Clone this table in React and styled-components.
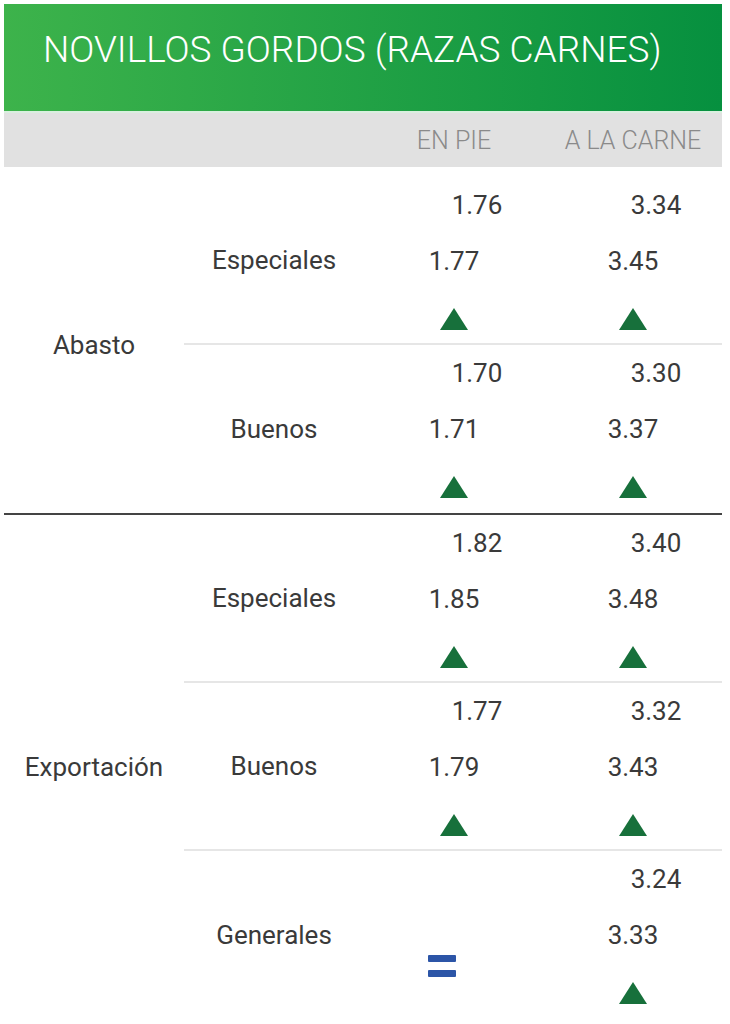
import React from 'react';
import styled, { createGlobalStyle } from 'styled-components';

const GlobalStyle = createGlobalStyle`
	body {
		margin: 0;
		background: #fff;
		font-family: Roboto, "Liberation Sans", sans-serif;
	}
`;

const groups = [
	{
		name: 'Abasto',
		rows: [
			{ name: 'Especiales', pie: { prev: '1.76', curr: '1.77', trend: 'up' }, carne: { prev: '3.34', curr: '3.45', trend: 'up' } },
			{ name: 'Buenos', pie: { prev: '1.70', curr: '1.71', trend: 'up' }, carne: { prev: '3.30', curr: '3.37', trend: 'up' } },
		],
	},
	{
		name: 'Exportación',
		rows: [
			{ name: 'Especiales', pie: { prev: '1.82', curr: '1.85', trend: 'up' }, carne: { prev: '3.40', curr: '3.48', trend: 'up' } },
			{ name: 'Buenos', pie: { prev: '1.77', curr: '1.79', trend: 'up' }, carne: { prev: '3.32', curr: '3.43', trend: 'up' } },
			{ name: 'Generales', pie: { trend: 'eq' }, carne: { prev: '3.24', curr: '3.33', trend: 'up' } },
		],
	},
];

const UpArrow = () => (
	<ArrowBox width="28" height="22" viewBox="0 0 28 22">
		<polygon points="14,0 28,22 0,22" fill="#17703b" />
	</ArrowBox>
);

const Value = ({ data }) => {
	if (data.trend === 'eq') {
		return (
			<Cell>
				<EqualSign><span /><span /></EqualSign>
			</Cell>
		);
	}
	return (
		<Cell>
			<Prev>{data.prev}</Prev>
			<Curr>{data.curr}</Curr>
			<UpArrow />
		</Cell>
	);
};

const App = () => (
	<Page>
		<GlobalStyle />
		<Title>NOVILLOS GORDOS (RAZAS CARNES)</Title>
		<ColHeader>
			<span />
			<span />
			<span>EN PIE</span>
			<span>A LA CARNE</span>
		</ColHeader>
		<Body>
			{groups.map(group => (
				<Group key={group.name}>
					<GroupLabel>{group.name}</GroupLabel>
					<div>
						{group.rows.map(row => (
							<SubRow key={row.name}>
								<SubLabel>{row.name}</SubLabel>
								<Value data={row.pie} />
								<Value data={row.carne} />
							</SubRow>
						))}
					</div>
				</Group>
			))}
		</Body>
	</Page>
);

const Page = styled.div`
	width: 718px;
	padding: 4px 8px 0 4px;
	color: #3a3a3a;
`;

const Title = styled.h1`
	margin: 0;
	height: 109px;
	box-sizing: border-box;
	padding: 27px 0 0 39px;
	background: linear-gradient(to right, #3db34b, #06903f);
	border-bottom: 2px solid #d9efdf;
	color: #fff;
	font-size: 37px;
	font-weight: 300;
	line-height: 1;
	white-space: nowrap;
`;

const ColHeader = styled.div`
	display: grid;
	grid-template-columns: 180px 180px 180px 178px;
	align-items: center;
	justify-items: center;
	height: 54px;
	background: #e1e1e1;
	color: #8a8a8a;
	font-size: 25px;
	font-weight: 300;
`;

const Body = styled.div`
	padding-top: 10px;
`;

const Group = styled.div`
	display: grid;
	grid-template-columns: 180px 538px;
	border-bottom: 2px solid #444;

	&:last-child {
		border-bottom: none;
	}
`;

const GroupLabel = styled.div`
	display: flex;
	align-items: center;
	justify-content: center;
	font-size: 26px;
`;

const SubRow = styled.div`
	display: grid;
	grid-template-columns: 180px 180px 178px;
	height: 168px;
	box-sizing: border-box;
	border-bottom: 2px solid #e6e6e6;

	&:last-child {
		border-bottom: none;
	}
`;

const SubLabel = styled.div`
	display: flex;
	align-items: center;
	justify-content: center;
	font-size: 26px;
`;

const Cell = styled.div`
	display: grid;
	grid-template-rows: 56px 56px 1fr;
	justify-items: center;
	font-size: 26px;
	line-height: 56px;
`;

const Prev = styled.div`
	padding-left: 46px;
`;

const Curr = styled.div``;

const ArrowBox = styled.svg`
	display: block;
	margin-top: 19px;
`;

const EqualSign = styled.div`
	grid-row: 1 / -1;
	align-self: start;
	display: flex;
	flex-direction: column;
	gap: 8px;
	margin: 104px 0 0 -24px;

	span {
		display: block;
		width: 28px;
		height: 7px;
		border-radius: 1px;
		background: #2c55a7;
	}
`;

export default App;
